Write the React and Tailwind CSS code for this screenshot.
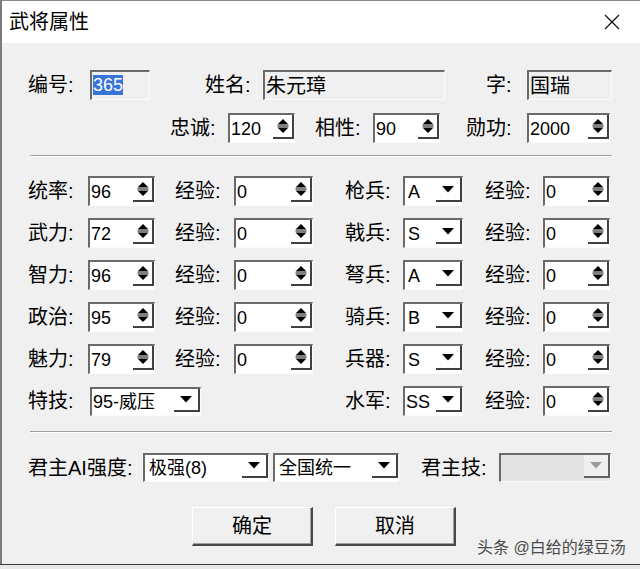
import React from "react";

const Up = ({ c = "#000" }) => (
  <svg width="12" height="18" viewBox="0 0 12 18">
    <polygon points="0.5,7.5 6,2 11.5,7.5" fill={c} />
    <line x1="0.5" y1="9" x2="11.5" y2="9" stroke={c} strokeWidth="1" />
    <polygon points="0.5,10.5 6,16 11.5,10.5" fill={c} />
  </svg>
);

const Down = ({ c = "#000" }) => (
  <svg width="12" height="7" viewBox="0 0 12 7">
    <polygon points="0,0 12,0 6,6.5" fill={c} />
  </svg>
);

const Sunken = ({ w, bg = "bg-white", h = "h-[30px]", children }) => (
  <div
    className={`${w} ${h} ${bg} shrink-0 border-t-2 border-l-2 border-t-[#6a6a6a] border-l-[#6a6a6a] border-b border-r border-b-[#fbfbfb] border-r-[#fbfbfb] flex items-stretch`}
  >
    {children}
  </div>
);

const Label = ({ w, children, cls = "" }) => (
  <div className={`${w} ${cls} shrink-0 text-[20px] leading-none text-black whitespace-nowrap`}>{children}</div>
);

const Spin = ({ w, v }) => (
  <Sunken w={w}>
    <div className="flex-1 pl-[1px] flex items-center text-[18px] leading-none">{v}</div>
    <div className="w-[21px] mb-[3px] border-r-2 border-b-2 border-r-[#404040] border-b-[#404040] flex items-center justify-center">
      <Up />
    </div>
  </Sunken>
);

const Drop = ({ w, v, disabled = false, h = "h-[30px]", cls = "pl-[3px]" }) => (
  <Sunken w={w} h={h} bg={disabled ? "bg-[#e4e4e4]" : "bg-white"}>
    <div className={`flex-1 ${cls} flex items-center text-[18px] leading-none whitespace-nowrap overflow-hidden`}>{v}</div>
    <div
      className={`w-[26px] mb-[3px] flex items-center justify-center ${
        disabled ? "bg-[#efefef] border-r-2 border-b-2 border-r-[#606060] border-b-[#606060]" : "border-r-2 border-b-2 border-r-[#404040] border-b-[#404040]"
      }`}
    >
      <Down c={disabled ? "#9a9a9a" : "#000"} />
    </div>
  </Sunken>
);

const Sep = ({ cls }) => (
  <div className={`${cls} mx-[28px] h-[2px] border-t border-t-[#a0a0a0] border-b border-b-white`} />
);

const Btn = ({ children }) => (
  <div className="w-[121px] h-[39px] bg-[#f0f0f0] border-t border-l border-t-white border-l-white border-r-2 border-b-2 border-r-[#4a4a4a] border-b-[#4a4a4a] shadow-[inset_-1px_-1px_0_#a0a0a0] flex items-center justify-center text-[20px] leading-none">
    {children}
  </div>
);

const rows = [
  ["统率", "96", "枪兵", "A"],
  ["武力", "72", "戟兵", "S"],
  ["智力", "96", "弩兵", "A"],
  ["政治", "95", "骑兵", "B"],
  ["魅力", "79", "兵器", "S"],
];

export default function App() {
  return (
    <div className="w-[640px] h-[569px] overflow-hidden bg-[#f0f0f0] font-['Liberation_Sans','Noto_Sans_CJK_SC',sans-serif] text-black flex flex-col">
      <div className="flex-1 flex flex-col border-l-2 border-l-[#7c7c7c] border-t border-t-[#8a8a8a]">
        <div className="h-[42px] bg-white flex items-center justify-between pl-[7px] pr-[20px]">
          <div className="text-[20px] leading-none">武将属性</div>
          <svg width="16" height="16" viewBox="0 0 16 16">
            <line x1="1" y1="1" x2="15" y2="15" stroke="#111" strokeWidth="1.3" />
            <line x1="15" y1="1" x2="1" y2="15" stroke="#111" strokeWidth="1.3" />
          </svg>
        </div>

        <div className="mt-[27px] pl-[26px] flex items-center">
          <Label w="w-[62px]">编号:</Label>
          <Sunken w="w-[60px]" bg="bg-[#f0f0f0]">
            <div className="pl-[1px] pt-[3px] flex items-start">
              <span className="bg-[#3874d8] text-white text-[18px] leading-[20px] px-[0px]">365</span>
            </div>
          </Sunken>
          <Label w="w-[58px]" cls="ml-[55px]">姓名:</Label>
          <Sunken w="w-[182px]" bg="bg-[#f0f0f0]">
            <div className="pl-[1px] flex items-center text-[20px] leading-none">朱元璋</div>
          </Sunken>
          <Label w="w-[41px]" cls="ml-[41px]">字:</Label>
          <Sunken w="w-[85px]" bg="bg-[#f0f0f0]">
            <div className="pl-[1px] flex items-center text-[20px] leading-none">国瑞</div>
          </Sunken>
        </div>

        <div className="mt-[13px] pl-[168px] flex items-center">
          <Label w="w-[58px]">忠诚:</Label>
          <Spin w="w-[67px]" v="120" />
          <Label w="w-[58px]" cls="ml-[20px]">相性:</Label>
          <Spin w="w-[67px]" v="90" />
          <Label w="w-[61px]" cls="ml-[26px]">勋功:</Label>
          <Spin w="w-[83px]" v="2000" />
        </div>

        <Sep cls="mt-[12px]" />

        <div className="mt-[19px] flex flex-col gap-[12px] pl-[26px]">
          {rows.map(([a, av, b, bv]) => (
            <div key={a} className="flex items-center">
              <Label w="w-[60px]">{a}:</Label>
              <Spin w="w-[67px]" v={av} />
              <Label w="w-[59px]" cls="ml-[20px]">经验:</Label>
              <Spin w="w-[79px]" v="0" />
              <Label w="w-[58px]" cls="ml-[32px]">{b}:</Label>
              <Drop w="w-[60px]" v={bv} />
              <Label w="w-[58px]" cls="ml-[22px]">经验:</Label>
              <Spin w="w-[67px]" v="0" />
            </div>
          ))}
          <div className="flex items-center">
            <Label w="w-[62px]">特技:</Label>
            <Drop w="w-[111px]" v="95-威压" h="h-[29px]" cls="pl-[1px]" />
            <div className="w-[144px] shrink-0" />
            <Label w="w-[58px]">水军:</Label>
            <Drop w="w-[60px]" v="SS" cls="pl-[1px]" />
            <Label w="w-[58px]" cls="ml-[22px]">经验:</Label>
            <Spin w="w-[67px]" v="0" />
          </div>
        </div>

        <Sep cls="mt-[15px]" />

        <div className="mt-[20px] pl-[26px] flex items-center">
          <Label w="w-[115px]">君主AI强度:</Label>
          <Drop w="w-[126px]" v="极强(8)" h="h-[29px]" cls="pl-[4px]" />
          <div className="w-[4px]" />
          <Drop w="w-[126px]" v="全国统一" h="h-[29px]" cls="pl-[4px]" />
          <Label w="w-[78px]" cls="ml-[22px]">君主技:</Label>
          <Drop w="w-[112px]" v="" disabled h="h-[29px]" />
        </div>

        <div className="mt-[25px] pl-[190px] flex items-start">
          <Btn>确定</Btn>
          <div className="w-[22px]" />
          <Btn>取消</Btn>
          <div className="ml-[21px] mt-[33px] text-[16px] leading-none text-[#4a4a4a] whitespace-nowrap">头条 @白给的绿豆汤</div>
        </div>
      </div>
      <div className="h-[1px] bg-[#3a3a3a]" />
      <div className="h-[4px] bg-[#e9e9e9]" />
    </div>
  );
}
